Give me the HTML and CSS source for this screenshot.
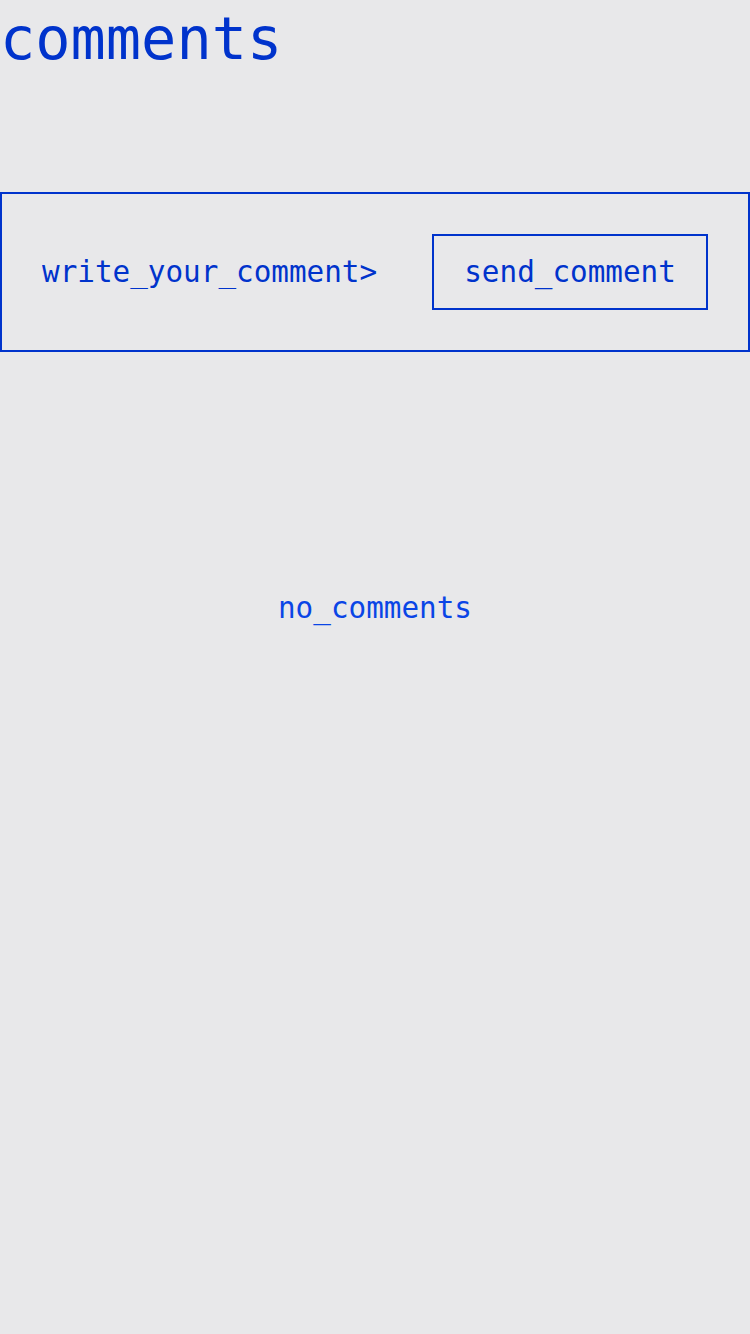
FILE: index.html
```html
<!DOCTYPE html>
<html lang="en">
<head>
<meta charset="utf-8">
<title>comments</title>
<link rel="stylesheet" href="styles.css">
</head>
<body>
  <main class="page">
    <h1 class="title">comments</h1>
    <form class="composer" onsubmit="return false">
      <input class="composer-input" type="text" placeholder="write_your_comment&gt;">
      <button class="composer-send" type="submit">send_comment</button>
    </form>
    <section class="list">
      <p class="empty">no_comments</p>
    </section>
  </main>
</body>
</html>
```
FILE: styles.css
```css
html, body {
  margin: 0;
  padding: 0;
  background: #e8e8ea;
}

body {
  font-family: "DejaVu Sans Mono", monospace;
  color: #0033cc;
  min-height: 1334px;
}

.page {
  display: flex;
  flex-direction: column;
}

.title {
  margin: 0;
  font-size: 58.6px;
  font-weight: normal;
  line-height: 78px;
  color: #0033cc;
  margin-bottom: 114px;
}

.composer {
  display: flex;
  align-items: center;
  justify-content: space-between;
  gap: 20px;
  border: 2px solid #0033cc;
  padding: 40px;
  margin: 0;
}

.composer-input {
  flex: 1;
  min-width: 0;
  border: none;
  outline: none;
  background: transparent;
  padding: 0;
  margin: 0;
  font-family: "DejaVu Sans Mono", monospace;
  font-size: 29.3px;
  color: #0033cc;
}

.composer-input::placeholder {
  color: #0033cc;
  opacity: 1;
}

.composer-send {
  flex: none;
  margin: 0;
  background: transparent;
  border: 2px solid #0033cc;
  border-radius: 0;
  padding: 19px 30.1px;
  font-family: "DejaVu Sans Mono", monospace;
  font-size: 29.3px;
  line-height: normal;
  color: #0033cc;
}

.list {
  display: flex;
  justify-content: center;
  padding-top: 239px;
}

.empty {
  margin: 0;
  font-size: 29.3px;
  color: #0a45e6;
}
```
